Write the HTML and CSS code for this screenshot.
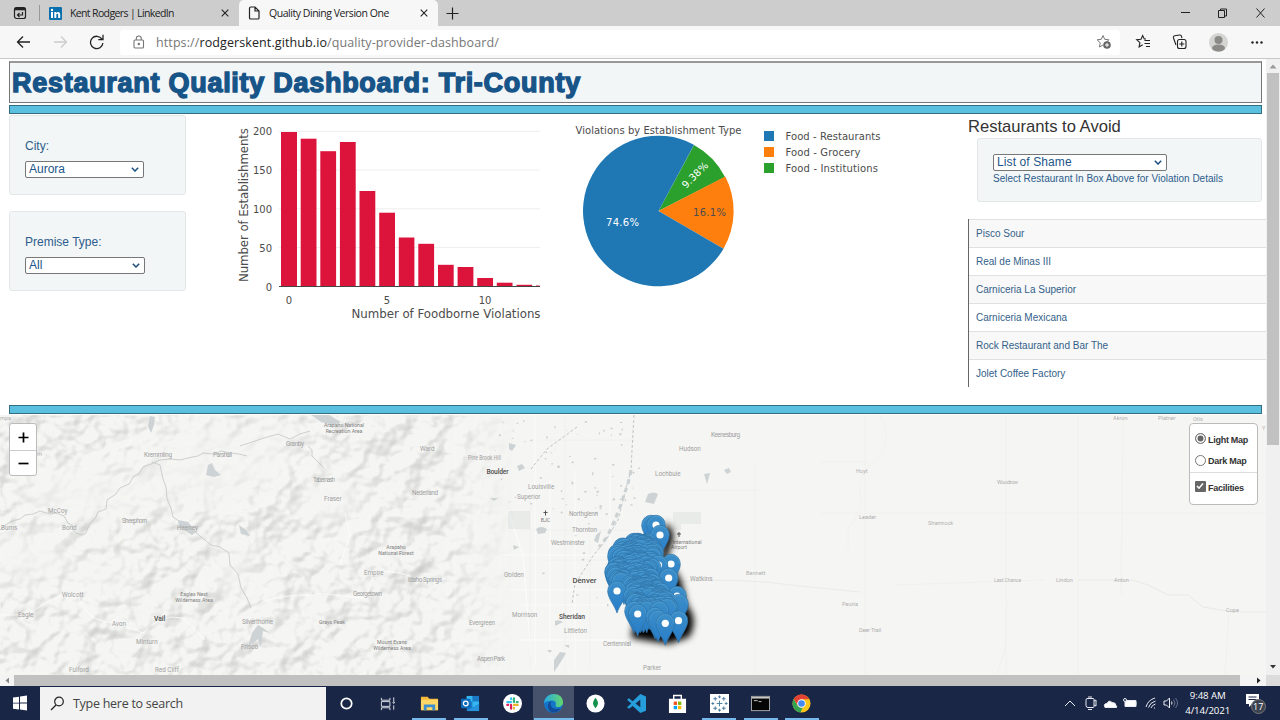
FILE: index.html
```html
<!DOCTYPE html>
<html lang="en">
<head>
<meta charset="utf-8">
<title>Quality Dining Version One</title>
<link rel="stylesheet" href="styles.css">
</head>
<body>
<div class="tabs">
  <svg class="tabmenu" width="14" height="14" viewBox="0 0 14 14" fill="none" stroke="#222" stroke-width="1.2"><rect x="1.5" y="1.5" width="11" height="11" rx="2"/><path d="M1.5 3h11" stroke-width="2.6"/><path d="M9.5 6v3h-5m2-2l-2 2 2 2"/></svg>
  <span class="tabsep"></span>
  <div class="tab">
    <svg width="13" height="13" viewBox="0 0 13 13"><rect width="13" height="13" rx="1" fill="#0a70ad"/><g fill="#fff"><rect x="2" y="5" width="2" height="6"/><circle cx="3" cy="3" r="1.2"/><path d="M5.3 5h1.9v.9c1-1.500 4-1.300 4 1.600V11h-2V8c0-1.700-1.900-1.600-1.900 0v3h-2z"/></g></svg>
    <span class="t1">Kent Rodgers | LinkedIn</span>
    <svg class="x" width="8" height="8" viewBox="0 0 8 8"><path d="M.7.7l6.600 6.600M7.300.7L.7 7.300" stroke="#222" stroke-width="1.100"/></svg>
  </div>
  <div class="tab active">
    <svg width="13" height="14" viewBox="0 0 13 14" fill="none" stroke="#222" stroke-width="1.200"><path d="M1.500 2.200q0-1.200 1.200-1.200H7l4 4v7q0 1-1.200 1H2.700q-1.200 0-1.200-1zM7 1v4h4"/></svg>
    <span class="t2">Quality Dining Version One</span>
    <svg class="x" width="8" height="8" viewBox="0 0 8 8"><path d="M.7.7l6.600 6.600M7.300.7L.7 7.300" stroke="#222" stroke-width="1.100"/></svg>
  </div>
  <svg class="plus" width="13" height="13" viewBox="0 0 13 13"><path d="M6.500 .5v12M.5 6.500h12" stroke="#222" stroke-width="1.200"/></svg>
  <svg class="winbtns" width="86" height="12" viewBox="0 0 86 12" fill="none" stroke="#222"><path d="M1 5.500h9"/><path d="M38.500 3.500h6v7h-6zM40.500 3.500v-1.500h6v7h-2"/><path d="M76.500 1.500l8 9M84.500 1.500l-8 9"/></svg>
</div>
<div class="toolbar">
  <svg class="nav" width="92" height="16" viewBox="0 0 92 16" fill="none" stroke="#222" stroke-width="1.300"><path d="M14 8H1.500M7 2.500L1.500 8 7 13.500"/><path d="M38 8h12.500M45 2.500L50.500 8 45 13.500" stroke="#ccc"/><path d="M86 5.200A6.200 6.200 0 1 0 86.900 9M87 .8v4.800h-4.700"/></svg>
  <div class="address">
    <svg width="12" height="14" viewBox="0 0 12 14" fill="none" stroke="#777" stroke-width="1.100"><rect x="1" y="5" width="9.500" height="8" rx="1"/><path d="M3.300 5V3.500a2.500 2.500 0 0 1 5 0V5"/><circle cx="5.800" cy="9" r=".7" fill="#777"/></svg>
    <span class="url">https://<b>rodgerskent.github.io</b>/quality-provider-dashboard/</span>
    <svg class="fav" width="16" height="16" viewBox="0 0 16 16" fill="none" stroke="#777"><path d="M7 1.500l1.700 3.800 4.200.5-3 3M7 1.500L5.300 5.300l-4.200.5 3.100 3-.7 4.200L7 11"/><circle cx="11" cy="11" r="3.800" fill="#666" stroke="none"/><path d="M11 9v4M9 11h4" stroke="#fff"/></svg>
  </div>
  <svg class="tools" width="132" height="24" viewBox="0 0 132 24" fill="none" stroke="#222" stroke-width="1.100"><path d="M11 9L9.300 9 7.700 5.500 6 9.300l-4.300.4 3.200 3-.8 4.200 3.600-2.100M9.500 10.500H15M9.500 13.500H15M11 16.500h4"/><rect x="42.500" y="9.500" width="8.500" height="9" rx="2"/><path d="M41 15l-2.500-7q-.5-1.800 1.200-2.200l5-.8q1.400-.2 1.800 1.200l.4 2M46.800 11.500v5M44.300 14h5"/><g stroke="none"><circle cx="83.500" cy="12.500" r="9.500" fill="#d4d4d2"/><circle cx="83.500" cy="10" r="4" fill="#8b8a87"/><ellipse cx="83.500" cy="18" rx="6.500" ry="3.500" fill="#8b8a87"/><g fill="#222"><circle cx="117.500" cy="12.500" r="1.200"/><circle cx="122" cy="12.500" r="1.200"/><circle cx="126.500" cy="12.500" r="1.200"/></g></g></svg>
</div>
<div class="viewport">
  <main class="page">
    <h1 class="title"><span>Restaurant Quality Dashboard: Tri-County</span></h1>
    <div class="rule top"></div>
    <div class="row">
      <div class="filters">
        <div class="well"><label>City:</label><div class="select city">Aurora<svg width="8" height="5" viewBox="0 0 8 5"><path d="M.8.8L4 4 7.200.8" fill="none" stroke="#1b4f80" stroke-width="1.500"/></svg></div></div>
        <div class="well"><label>Premise Type:</label><div class="select prem">All<svg width="8" height="5" viewBox="0 0 8 5"><path d="M.8.8L4 4 7.200.8" fill="none" stroke="#1b4f80" stroke-width="1.500"/></svg></div></div>
      </div>
      <svg class="charts" width="722" height="290" viewBox="208 115 722 290">
        <path d="M279 131.300h261M279 170h261M279 208.800h261M279 247.600h261" stroke="#eee"/>
        <g fill="#dc143c"><rect x="281" y="132" width="16" height="154"/><rect x="300.700" y="138.700" width="15.800" height="148"/><rect x="320.300" y="151.200" width="15.800" height="135"/><rect x="339.900" y="142" width="15.800" height="144"/><rect x="359.500" y="191" width="15.800" height="95"/><rect x="379.200" y="212.700" width="15.800" height="74"/><rect x="398.800" y="237.500" width="15.600" height="49"/><rect x="418.300" y="243.800" width="15.800" height="43"/><rect x="438" y="264.800" width="15.700" height="22"/><rect x="457.600" y="267" width="15.800" height="19"/><rect x="477.200" y="278" width="15.800" height="8"/><rect x="496.800" y="282.700" width="15.700" height="4"/><rect x="516.500" y="284.800" width="15.700" height="2"/><rect x="536" y="285.500" width="3.500" height="1"/></g>
        <path d="M279 286.500h261" stroke="#444" stroke-width="1.200"/>
        <g class="tick"><g text-anchor="end"><text x="272" y="135.200">200</text><text x="272" y="174">150</text><text x="272" y="212.800">100</text><text x="272" y="251.500">50</text><text x="272" y="290.500">0</text></g><g text-anchor="middle"><text x="289" y="304">0</text><text x="387" y="304">5</text><text x="485" y="304">10</text></g></g>
        <g class="axis"><text x="351.500" y="317.500" textLength="189">Number of Foodborne Violations</text><text transform="translate(247.500 282) rotate(-90)" textLength="154">Number of Establishments</text></g>
        <path d="M658.500 211L694 145A75.300 75.300 0 0 1 725 177z" fill="#2ca02c"/><path d="M658.500 211L725.300 176.500A75.300 75.300 0 0 1 723.500 248.700z" fill="#ff7f0e"/><path d="M658.500 211L723.500 248.700A75.300 75.300 0 1 1 694 144.700z" fill="#1f77b4"/>
        <g class="label"><text x="575.500" y="134" textLength="166">Violations by Establishment Type</text><text x="606" y="225.500" textLength="33" class="light">74.6%</text><text x="693" y="216" textLength="33">16.1%</text><text transform="translate(686 189) rotate(-45)" textLength="32.500" class="light">9.38%</text><text x="785.500" y="140" textLength="95">Food - Restaurants</text><text x="785.500" y="156" textLength="75">Food - Grocery</text><text x="785.500" y="171.500" textLength="92.500">Food - Institutions</text></g>
        <rect x="764" y="131" width="10" height="10" fill="#1f77b4"/><rect x="764" y="147" width="10" height="10" fill="#ff7f0e"/><rect x="764" y="163" width="10" height="10" fill="#2ca02c"/>
      </svg>
      <section class="avoid">
        <h2>Restaurants to Avoid</h2>
        <div class="well shame"><div class="select">List of Shame<svg width="8" height="5" viewBox="0 0 8 5"><path d="M.8.8L4 4 7.200.8" fill="none" stroke="#1b4f80" stroke-width="1.500"/></svg></div><p>Select Restaurant In Box Above for Violation Details</p></div>
        <ul class="list"><li>Pisco Sour</li><li>Real de Minas III</li><li>Carniceria La Superior</li><li>Carniceria Mexicana</li><li>Rock Restaurant and Bar The</li><li>Jolet Coffee Factory</li></ul>
      </section>
    </div>
    <div class="rule bottom"></div>
    <div class="map">
      <svg width="1266" height="260" viewBox="0 415 1266 260">
        <defs>
          <filter id="relief" x="0" y="0" width="100%" height="100%" color-interpolation-filters="sRGB"><feTurbulence type="fractalNoise" baseFrequency=".034 .038" numOctaves="3" seed="21" result="n"/><feColorMatrix in="n" values="0 0 0 0 0 0 0 0 0 0 0 0 0 0 0 1 0 0 0 0"/><feDiffuseLighting surfaceScale="12" diffuseConstant="1.150" lighting-color="#fff"><feDistantLight azimuth="225" elevation="60"/></feDiffuseLighting><feComponentTransfer><feFuncR type="linear" slope=".17" intercept=".793"/><feFuncG type="linear" slope=".17" intercept=".793"/><feFuncB type="linear" slope=".17" intercept=".786"/></feComponentTransfer></filter>
          <linearGradient id="fade"><stop offset="0" stop-color="#fff"/><stop offset=".86" stop-color="#fff"/><stop offset="1" stop-color="#000"/></linearGradient>
          <filter id="soft" x="-50%" y="-50%" width="200%" height="200%"><feGaussianBlur stdDeviation="14"/></filter>
          <filter id="shade" x="-50%" y="-50%" width="200%" height="200%"><feGaussianBlur stdDeviation="3.500"/></filter>
          <mask id="hills"><rect y="415" width="515" height="260" fill="url(#fade)"/><g filter="url(#soft)" fill="#000" opacity=".8"><ellipse cx="205" cy="465" rx="65" ry="40"/><ellipse cx="90" cy="495" rx="70" ry="25"/><ellipse cx="330" cy="500" rx="30" ry="24"/><ellipse cx="30" cy="560" rx="40" ry="25"/><ellipse cx="235" cy="570" rx="18" ry="30"/><ellipse cx="105" cy="575" rx="28" ry="18"/><ellipse cx="275" cy="440" rx="30" ry="20"/></g></mask>
          <linearGradient id="pinfill" x2="0" y2="1"><stop offset="0" stop-color="#3d8fc8"/><stop offset="1" stop-color="#267cc9"/></linearGradient>
          <g id="pinbody"><path d="M0 22C-2 15-9.300 7-9.300 0A9.300 9.800 0 0 1 9.300 0C9.300 7 2 15 0 22z" fill="url(#pinfill)" stroke="#2f75aa" stroke-width=".7"/><path d="M-8.300 0A8.300 8.800 0 0 1 8.300 0" fill="none" stroke="#5ba4d5" stroke-width=".5"/></g>
          <g id="pin"><use href="#pinbody"/><circle r="3.600" fill="#fff"/></g>
        </defs>
        <rect y="415" width="1266" height="260" fill="#f5f5f3"/>
        <g mask="url(#hills)"><rect y="415" width="515" height="260" filter="url(#relief)"/></g>
        <g fill="none" stroke="#efefed"><path d="M865 415v260M1006 415v260M1078 415v260M1123 415l-2 180M820 462h50M820 513h446M755 462v230M680 490h80M540 440h95M565 415v260M520 530h150M530 500v170M545 560h120M590 540v130M1229 610l-4 65M1007 600l-2 50-10 30M895 585l150-5M880 415q15 25-5 45t-15 30q5 20-12 38v22" stroke-width=".8"/><path d="M670 582q70-5 130 4l60 6" stroke="#ebebe9"/><path d="M1078 580h55l15 5 20 10h20l15 12 30 5h33" stroke="#e9eae8"/></g>
        <g fill="none" stroke="#fff"><path d="M0 615h28q30-24 50-20 7 28 40 28l25 10q18-20 40-15l22 22M310 595q-40 0-55 12M315 593l50 5 10-25q15-4 35 3M340 565l10-30-5-22M508 510l15 45 8 100M535 415v250M550 480v180M575 470v200M610 470v80M500 555h110M510 590h110M520 605h100M520 640h130" stroke-width="1" opacity=".7"/></g>
        <g fill="none" stroke="#c2c6c5" stroke-width=".8"><path d="M0 530q8-9 20-11l5-4 8-1 7-3 10 3 6-1 8 3 4 7 5 3v4q8 8 13 3l3-8 7-8 2-5 8-3 1-9 9-6 4-6 9-4 5-8 5-2 4-7 8-3 9-4 10-1 10 1 12-3 6-1 5-3 10 1 8-3 10 2 8 1 8 2"/><path d="M152 462l8 3 3 14 3 8 1 12 4 9 2 9 22 15 16 13 9 2 9 6 1 12 8 9 3 14 6 10 4 10"/><path d="M240 446l12-4 12-4 14-4 12 5 10-5 10-3M308 446l4 4v6l6 6 6 6"/><path d="M634 415l-2 35-1 20-6 22-7 28-12 20-13 16-18 28-3 20M577 427l-30 22-16 20" stroke-dasharray="3 2" stroke-width="1"/></g>
        <path d="M631 470q-2 12-6 22-6 20-18 45l-8 10" fill="none" stroke="#ccd2d3" stroke-width="3" stroke-dasharray="5 4"/>
        <g fill="#cdd3d4"><path d="M150 416l5 1-1 8-3 8-3-7zM208 465l4-2 3 7 6 5-7 2-8-2zM178 520l10 2 8 10-4 3-13-8zM239 525l7 5 4 6-9-2zM258 625l5 3 7 5-7-2-2 16-3-8-10 8 4-14zM311 415h18l12 7-8 3-12-3zM648 494q6-3 10 0l-4 10-9-2zM704 474l6-1-3 11zM509 443l7 2-4 6-3-2zM517 466l5-2 3 4-6 3zM536 529q5-4 11 0l-2 4-7 1zM555 621q4-2 8 1l-8 4zM560 652l6 1-4 7-8 12v-12zM596 535l5-4-3 12-4-2zM724 470l5-2 2 4-4 2z"/><path d="M508 511h22v18h-22zM673 512h28v12h-20v6h-8z" opacity=".3"/><path d="M571 481l3 2-2 2M592 472l2 1-2 3M547 650h5l-2 3M564 645h5v3M513 545l6 2-5 3M490 498h8l-4 3"/></g>
        <g id="water" fill="#cbd1d2"></g>
        <g class="places">
          <text x="144" y="456.500" textLength="28">Kremmling</text><text x="213" y="457" textLength="19">Parshall</text><text x="286" y="445.500" textLength="18">Granby</text><text x="313" y="482" textLength="22">Tabernash</text><text x="324" y="500.500">Fraser</text><text x="48" y="513">McCoy</text><text x="1" y="530">Burns</text><text x="62" y="530">Bond</text><text x="122" y="522.500" textLength="25">Sheephorn</text><text x="177" y="530">Heeney</text><text x="62" y="597">Wolcott</text><text x="18" y="616.500">Eagle</text><text x="112" y="625.500">Avon</text><text x="136" y="643.500">Minturn</text><text x="69" y="671.500">Fulford</text><text x="155" y="672">Red Cliff</text><text x="242" y="623.500" textLength="31">Silverthorne</text><text x="241" y="648.500">Frisco</text><text x="364" y="574.500">Empire</text><text x="353" y="596" textLength="29">Georgetown</text><text x="408" y="581.500" textLength="34">Idaho Springs</text><text x="420" y="451">Ward</text><text x="412" y="495" textLength="26">Nederland</text><text x="468" y="459.500" textLength="33" lengthAdjust="spacingAndGlyphs">Pine Brook Hill</text><text x="528" y="488.500">Louisville</text><text x="517" y="498.500">Superior</text><text x="569" y="515.500" textLength="29">Northglenn</text><text x="572" y="531.500" textLength="25">Thornton</text><text x="551" y="544.500" textLength="34">Westminster</text><text x="504" y="576.500">Golden</text><text x="512" y="616.500">Morrison</text><text x="469" y="625" textLength="26">Evergreen</text><text x="477" y="660.500" textLength="28">Aspen Park</text><text x="564" y="632.500">Littleton</text><text x="603" y="646" textLength="28">Centennial</text><text x="643" y="670">Parker</text><text x="690" y="580.500">Watkins</text><text x="711" y="437" textLength="29">Keenesburg</text><text x="679" y="450.500">Hudson</text><text x="655" y="475.500">Lochbuie</text>
          <g class="tiny"><text x="0" y="420">mpa</text><text x="37" y="456">m</text><text x="746" y="574.500">Bennett</text><text x="856" y="473">Hoyt</text><text x="859" y="519">Leader</text><text x="928" y="525">Shamrock</text><text x="997" y="484" textLength="21">Woodrow</text><text x="842" y="606">Peoria</text><text x="859" y="631.500" textLength="22">Deer Trail</text><text x="994" y="582" textLength="27" lengthAdjust="spacingAndGlyphs">Last Chance</text><text x="1056" y="582">Lindon</text><text x="1114" y="582">Anton</text><text x="1226" y="612">Cope</text><text x="1113" y="420">Akron</text><text x="1158" y="420">Platner</text><text x="1193" y="421">Otis</text><text x="1262" y="430">Y</text></g>
          <g class="parks" text-anchor="middle"><text x="344" y="427">Arapaho National</text><text x="344" y="433">Recreation Area</text><text x="396" y="548.500">Arapaho</text><text x="396" y="554.500">National Forest</text><text x="194" y="595.500">Eagles Nest</text><text x="194" y="601.500">Wilderness Area</text><text x="332" y="624">Grays Peak</text><text x="392" y="644">Mount Evans</text><text x="392" y="650">Wilderness Area</text><text x="545.500" y="521.500">BJC</text><text x="687" y="543.500">International</text><text x="679" y="548.500">Airport</text></g>
          <g class="cities"><text x="154" y="621">Vail</text><text x="486.500" y="474" textLength="22">Boulder</text><text x="572.500" y="583" textLength="24" lengthAdjust="spacingAndGlyphs">Denver</text><text x="559" y="619" textLength="26">Sheridan</text></g>
        </g>
        <path d="M545.500 510.500v5M543.500 512.500h4M679 532v5M677 534h4" stroke="#555"/>
        <path d="M665 522q10 8 8 18l-6 18 14 22 6 25q12 15 2 32l-20 7-38-6 4-20 20-10z" filter="url(#shade)"/>
        <g id="pins"></g>
      </svg>
      <div class="zoomctl"><span><svg width="11" height="11" viewBox="0 0 11 11"><path d="M5.500 .5v10M.5 5.500h10" stroke="#000" stroke-width="1.700"/></svg></span><span><svg width="11" height="11" viewBox="0 0 11 11"><path d="M.5 5.500h10" stroke="#000" stroke-width="1.700"/></svg></span></div>
      <div class="layers"><label><i class="radio on"></i>Light Map</label><label><i class="radio"></i>Dark Map</label><hr><label><i class="check"><svg width="10" height="10" viewBox="0 0 10 10"><path d="M2 5l2 2.200L8 2.500" fill="none" stroke="#fff" stroke-width="1.500"/></svg></i>Facilities</label></div>
    </div>
  </main>
  <div class="vscroll"><svg width="14" height="14" viewBox="0 0 14 14"><path d="M3.500 9.500L7 5.500l3.500 4z" fill="#999"/></svg><span></span><svg width="14" height="14" viewBox="0 0 14 14"><path d="M4 5l3 3.500L10 5z" fill="#333"/></svg></div>
</div>
<div class="hscroll"><svg width="14" height="11" viewBox="0 0 14 11"><path d="M9 2.500L5.500 5.500 9 8.500z" fill="#888"/></svg><span></span><svg width="26" height="11" viewBox="0 0 26 11"><path d="M17 2.500l3.500 3L17 8.500z" fill="#222"/></svg><i></i></div>
<footer class="taskbar">
  <svg class="start" width="40" height="34" viewBox="0 0 40 34"><path d="M13 11.500l6-.8v6H13zM20 10.600l7-1v7h-7zM13 17.500h6v6l-6-.8zM20 17.500h7v7l-7-1z" fill="#fff"/></svg>
  <div class="search"><svg width="15" height="15" viewBox="0 0 15 15" fill="none" stroke="#222" stroke-width="1.200"><circle cx="9" cy="5.500" r="4.300"/><path d="M6 9l-5 5"/></svg><span>Type here to search</span></div>
  <div class="apps">
    <div><svg viewBox="0 0 20 20"><circle cx="10" cy="10" r="5.500" fill="none" stroke="#fff" stroke-width="1.800"/></svg></div>
    <div><svg viewBox="0 0 20 20" fill="none" stroke="#dfe3eb"><path d="M2.500 4v2.500h9V4M2.500 17v-2.500h9V17M2.500 8h9v5h-9zM15.500 3.500V8m0 4v4.500"/><circle cx="15.500" cy="9" r=".8"/></svg></div>
    <div class="on"><svg viewBox="0 0 20 20"><path d="M1 3h7l2 2h9v12H1z" fill="#f5b83d"/><path d="M1 6h18v11H1z" fill="#ffd766"/><path d="M4 17v-6h12v6h-3v-3H7v3z" fill="#3b8fd0"/></svg></div>
    <div class="on"><svg viewBox="0 0 20 20"><path d="M6 2h13v16H6z" fill="#1b78c4"/><path d="M6 2h6v6H6zM12 8h7v6h-7z" fill="#35b8f1"/><path d="M6 18l13-8v8z" fill="#2494dc"/><rect y="5" width="10" height="10" rx="1" fill="#0f6bbd"/><circle cx="5" cy="10" r="2.500" fill="none" stroke="#fff" stroke-width="1.300"/></svg></div>
    <div><svg viewBox="0 0 20 20" fill="none" stroke-width="2.300" stroke-linecap="round"><circle cx="10" cy="10" r="10" fill="#fff"/><path d="M4.500 8.500h4M8.500 4.500v1" stroke="#36c5f0"/><path d="M11.500 4.500v4M14.500 8.500h1" stroke="#2eb67d"/><path d="M11.500 11.500h4M11.500 14.500v1" stroke="#ecb22e"/><path d="M8.500 11.500v4M4.500 11.500h1" stroke="#e01e5a"/></svg></div>
    <div class="cur"><svg viewBox="0 0 20 20"><defs><linearGradient id="eg"><stop stop-color="#28a9e4"/><stop offset="1" stop-color="#65d66b"/></linearGradient></defs><circle cx="10" cy="10" r="10" fill="#1475c9"/><path d="M0 10C1-3 20-3 20 9c0 5-7 6-8 3 2-4-2-6-5-5-3 0-6 1-7 3z" fill="url(#eg)"/><path d="M8 8c-3 4 1 10 10 7-5 7-14 5-14-2 0-3 2-5 4-5z" fill="#134c98"/></svg></div>
    <div><svg viewBox="0 0 20 20"><circle cx="10" cy="10" r="9.500" fill="#fff"/><path d="M10 4c3.500 4.500 3.500 7 0 11-3.500-4-3.500-6.500 0-11z" fill="#13934b"/></svg></div>
    <div><svg viewBox="0 0 20 20"><path d="M14 0l6 2.500v15L14 20 6 12.500l-4 3L0 14l4.500-4L0 6l2-1.500 4 3zM14 6l-5 4 5 4z" fill="#259edb" fill-rule="evenodd"/></svg></div>
    <div><svg viewBox="0 0 20 20"><path d="M6 6V1.500h8V6" fill="none" stroke="#fff" stroke-width="1.500"/><path d="M1 5h18v15H1z" fill="#fff"/><path d="M6 8h3.500v3.500H6z" fill="#f25022"/><path d="M10.500 8H14v3.500h-3.500z" fill="#7fba00"/><path d="M6 12.500h3.500V16H6z" fill="#00a4ef"/><path d="M10.500 12.500H14V16h-3.500z" fill="#ffb900"/></svg></div>
    <div class="on"><svg viewBox="0 0 20 20"><rect width="20" height="20" fill="#fff"/><path d="M10 7v6M7 10h6M5.500 3v4M3.500 5h4M14.500 3v4M12.500 5h4M5.500 13v4M3.500 15h4M14.500 13v4M12.500 15h4M10 1.500v3M8.500 3h3M10 15.500v3M8.500 17h3M1.500 10h3M3 8.500v3M15.500 10h3M17 8.500v3" stroke="#497b9f"/></svg></div>
    <div class="on"><svg viewBox="0 0 20 20"><rect x=".5" y="2.500" width="19" height="15" fill="#050505" stroke="#aaa"/><path d="M1 4h18" stroke="#ddd" stroke-width="1.500"/><path d="M3 7h4M8 8h3" stroke="#ccc"/></svg></div>
    <div class="on"><svg viewBox="0 0 20 20"><circle cx="10" cy="10" r="9.500" fill="#fbc61a"/><path d="M1.800 5.200A9.500 9.500 0 0 1 18.200 5.500H10L6 12z" fill="#e44134"/><path d="M1.800 5.200L6 12.500l5 2L9 19.500A9.500 9.500 0 0 1 1.800 5.200z" fill="#34a351"/><circle cx="10" cy="10" r="4.500" fill="#fff"/><circle cx="10" cy="10" r="3.500" fill="#4688f1"/></svg></div>
  </div>
  <svg class="tray" width="118" height="20" viewBox="1060 693 118 20" fill="none" stroke="#e8ebf2" stroke-width="1"><path d="M1065 706l5-5 5 5M1087 698.500h6q1 0 1 1v7q0 1-1 1h-5q-2 0-2-2v-5q0-2 1-2M1094 701l2-1v6l-2-1M1088 697h4M1088 709.500h4"/><path d="M1105 707.500q-2-4 2-4 2-4 5-1 4 0 4 3 2 2 0 2z" fill="#fff"/><path d="M1125 700.500h11v6h-11zM1136 702.500v2" fill="#fff"/><circle cx="1125" cy="700" r="1.500" fill="#1a2645"/><path d="M1146 707q2-7 9-9M1148.500 707.500q1.500-5 7-6.500M1151 708q1-3 4.500-4M1154 708h1"/><path d="M1164 701h2.500l3-3v10l-3-3h-2.500zM1171.500 701.500q1 1.500 0 3"/><path d="M1173.500 699.500q3 3.500 0 7M1175.500 698q4 5 0 10" stroke="#68738f"/></svg>
  <div class="clock"><span>9:48 AM</span><span>4/14/2021</span></div>
  <div class="note"><svg width="18" height="16" viewBox="0 0 18 16"><path d="M1 1h13v10H7l-3 3v-3H1z" fill="#fff"/><path d="M3.500 4h8M3.500 6.500h8" stroke="#1a2645"/></svg><em>17</em></div>
</footer>
<script src="map.js"></script>
</body>
</html>
```
FILE: styles.css
```css
*{box-sizing:border-box}
body{margin:0;width:1280px;height:720px;overflow:hidden;display:flex;flex-direction:column;background:#fff;font-family:"Liberation Sans",Arial,sans-serif}
svg{display:block;flex:none}
.tabs{height:26px;background:#cdcdcd;display:flex;align-items:center;font:10.5px "Open Sans",sans-serif;color:#222}
.tabmenu{margin-left:13px}
.tabsep{width:1px;height:16px;background:#999;margin:0 9px 0 12px}
.tab{height:26px;width:190px;display:flex;align-items:center;white-space:nowrap}
.tab span{margin-left:8px}
.tab .x{margin-left:auto;margin-right:10px}
.t1{letter-spacing:-.63px}
.t2{letter-spacing:-.46px}
.tab.active{width:199px;background:#f7f7f7;border-radius:5px 5px 0 0;padding-left:9px}
.tab.active .t2{margin-left:8px}
.plus{margin-left:8px}
.winbtns{margin-left:auto;margin-right:14px}
.toolbar{height:33px;background:#f7f7f7;border-bottom:1px solid #c8c8c8;display:flex;align-items:center}
.nav{margin-left:16px}
.address{margin-left:12px;width:1000px;height:25px;border-radius:3px;background:#fff;display:flex;align-items:center;padding:0 8px 0 13px;font:12.5px "Open Sans",sans-serif;color:#777}
.url{margin-left:11px;letter-spacing:.1px;white-space:nowrap}
.url b{font-weight:400;color:#222}
.fav{margin-left:auto}
.tools{margin-left:15px}
.viewport{height:616px;display:flex}
.page{width:1266px;overflow:hidden}
.title{margin:2px 4px 0 9px;height:42px;border:1px solid #777;border-top:2px solid #999;background:#f3f6f7;color:#175488;font-size:27px;line-height:41px;padding-left:2px;white-space:nowrap}
.title span{letter-spacing:.72px;-webkit-text-stroke:1.4px #175488}
.rule{height:9px;border:1px solid #346c80;background:#5bbfe0;margin:0 4px 0 9px}
.rule.top{margin-top:2px}
.row{height:291px;display:flex;padding:1px 0 0 9px}
.filters{width:177px;margin-right:22px;display:flex;flex-direction:column;gap:16px;color:#2c5d8c;font-size:12px}
.well{height:80px;background:#f3f6f7;border:1px solid #e3e7e8;border-radius:3px;padding:23px 15px 0 15px}
.well label{display:block;height:22px;line-height:14px}
.select{height:17px;border:1px solid #777;border-radius:2px;background:#fff;color:#225589;font-size:12px;line-height:15px;padding:0 4px 0 3px;display:flex;align-items:center;justify-content:space-between}
.city{width:119px}
.prem{width:120px}
.charts text{font-family:"DejaVu Sans",Verdana,sans-serif;fill:#4c4c4c}
.charts .tick text{font-size:10px}
.charts .axis text{font-size:11.8px}
.charts .label text{font-size:10px}
.charts .label .light{fill:#fff}
.avoid{width:298px;margin-left:38px}
.avoid h2{font-size:16.6px;font-weight:400;color:#333;margin:0;height:23px;line-height:23px}
.shame{height:64px;margin:0 4px 17px 9px;padding-top:15px;color:#2c5d8c}
.shame .select{width:174px;letter-spacing:.1px}
.shame p{margin:2px 0 0;font-size:10px;line-height:12px;white-space:nowrap}
.list{list-style:none;margin:0;padding:0;border-left:1px solid #666;color:#336189;font-size:10px}
.list li{height:28px;line-height:28px;padding-left:7px;border-top:1px solid #e0e0e0}
.list li:nth-child(odd){background:#f8f8f8}
.map{margin-top:1px;height:260px;position:relative}
.places{font-family:"Roboto","Noto Sans",sans-serif;font-size:6.3px;fill:#a0a0a0}
.places .tiny{font-size:5.6px;fill:#b0b0b0}
.places .parks{font-size:5.2px;fill:#808080}
.places .cities{font-size:6.7px;fill:#505050;font-weight:500}
.zoomctl{position:absolute;left:9px;top:8px;width:28px;height:53px;border:1px solid #bbb;border-radius:3px;background:#fff;display:flex;flex-direction:column}
.zoomctl span{height:26px;display:flex;align-items:center;justify-content:center}
.zoomctl span+span{border-top:1px solid #ccc;height:25px}
.layers{position:absolute;left:1189px;top:8px;width:69px;height:82px;border:1px solid #bbb;border-radius:4px;background:#fff;padding:5px 0 0;font-size:9px;font-weight:700;color:#333}
.layers label{display:flex;align-items:center;height:21.5px;padding-left:5px;letter-spacing:-.27px;white-space:nowrap}
.layers hr{border:0;border-top:1px solid #ddd;margin:0 0 4px}
.radio,.check{width:11px;height:11px;border:1px solid #777;border-radius:50%;margin:-2px 2px 0 0;flex:none}
.radio.on{background:#666;box-shadow:inset 0 0 0 1.5px #fff}
.check{background:#666;border:0;border-radius:1px}
.vscroll{width:14px;background:#f0f0f0;display:flex;flex-direction:column}
.vscroll span{height:372px;background:#c1c1c1;margin:0 1px 215px}
.hscroll{height:11px;background:#f4f4f4;display:flex}
.hscroll span{width:1226px;background:#c1c1c1}
.hscroll i{flex:1;background:#dcdcdc}
.taskbar{height:34px;background:#1a2645;display:flex;align-items:center;color:#fff;font-family:"Open Sans",sans-serif}
.search{width:286px;height:33px;background:#f2f2f2;display:flex;align-items:center;padding-left:10px;color:#444;font-size:12.5px}
.search span{margin-left:8px;letter-spacing:-.27px}
.apps{display:flex;height:34px}
.apps div{width:41.4px;height:34px;display:flex;align-items:center;justify-content:center}
.apps svg{width:19px;height:19px}
.apps .on{background:linear-gradient(#76b9ed,#76b9ed) center bottom/34px 2px no-repeat}
.apps .cur{background:linear-gradient(#76b9ed,#76b9ed) center bottom/40px 2px no-repeat,#46526c}
.tray{margin-left:237px}
.clock{width:60px;display:flex;flex-direction:column;align-items:center;font-size:9.7px;line-height:15px;margin:-1px 0 0;letter-spacing:-.1px}
.note{margin-left:7px;width:22px;height:20px;position:relative}
.note em{position:absolute;left:6px;top:6px;width:15px;height:15px;border-radius:50%;background:#3b4250;border:1px solid #777;font:9px/13px "Open Sans",sans-serif;text-align:center}
```
FILE: map.js
```js
const pins = document.getElementById('pins');
const put = (id, x, y) => {
  const u = document.createElementNS('http://www.w3.org/2000/svg', 'use');
  u.setAttribute('href', id);
  u.setAttribute('x', x);
  u.setAttribute('y', y);
  pins.appendChild(u);
};
let seed = 7;
const rnd = () => (seed = (seed * 16807) % 2147483647) / 2147483647;

// Extent of the dense facility cluster: [y, left, right]
const bands = [[543, 634, 648], [548, 620, 655], [554, 615, 657], [562, 614, 655], [572, 614, 650],
  [580, 616, 652], [588, 628, 655], [596, 632, 668], [606, 636, 668], [612, 638, 672]];
const facilities = [[651, 525, 1], [656, 525, 1], [660, 535, 1], [671, 564, 1], [658.5, 565, 1], [668.700, 578, 1],
  [677, 596, 1], [679, 604, 0], [617, 591, 1], [634, 611, 0], [637.700, 614, 1], [655, 617, 0], [658, 620, 0],
  [678.500, 620.700, 1], [665.300, 623.300, 1]];
for (let b = 0; b < bands.length - 1; b++) {
  const [y0, l0, r0] = bands[b], [y1, l1, r1] = bands[b + 1];
  for (let y = y0; y < y1; y += 1.2) {
    const t = (y - y0) / (y1 - y0), l = l0 + (l1 - l0) * t, r = r0 + (r1 - r0) * t;
    for (let k = 0; k < 4; k++) facilities.push([l + (r - l) * rnd(), y, 0]);
  }
}
facilities.sort((a, b) => a[1] - b[1]).forEach(([x, y, dot]) => put(dot ? '#pin' : '#pinbody', x, y));

// Scattered ponds and reservoirs along the Front Range
const water = document.getElementById('water');
for (let i = 0; i < 75; i++) {
  const p = document.createElementNS('http://www.w3.org/2000/svg', 'ellipse');
  p.setAttribute('cx', 495 + rnd() * 145);
  p.setAttribute('cy', 418 + rnd() * (i % 3 ? 100 : 245));
  p.setAttribute('rx', .5 + rnd());
  p.setAttribute('ry', .4 + rnd() * .8);
  water.appendChild(p);
}
```
